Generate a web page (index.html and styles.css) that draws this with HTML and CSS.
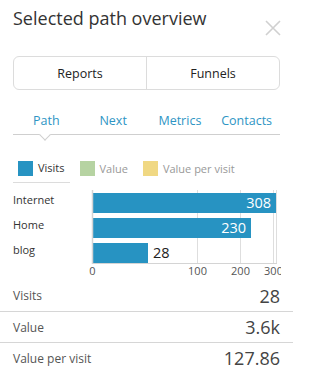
FILE: index.html
```html
<!DOCTYPE html>
<html>
<head>
<meta charset="utf-8">
<link rel="stylesheet" href="styles.css">
</head>
<body>
<div class="panel">
  <div class="header">
    <h1 class="title">Selected path overview</h1>
    <svg class="close" width="16" height="16" viewBox="0 0 16 16"><path d="M1 1L15 15M15 1L1 15" stroke="#d0d0d0" stroke-width="1.6" fill="none"/></svg>
  </div>
  <div class="btn-group">
    <div class="btn">Reports</div>
    <div class="btn">Funnels</div>
  </div>
  <div class="tabs">
    <div class="tab active">Path</div>
    <div class="tab">Next</div>
    <div class="tab">Metrics</div>
    <div class="tab">Contacts</div>
  </div>
  <div class="legend">
    <div class="legend-item active"><span class="swatch blue"></span>Visits</div>
    <div class="legend-item"><span class="swatch green"></span>Value</div>
    <div class="legend-item"><span class="swatch yellow"></span>Value per visit</div>
  </div>
  <div class="chart">
    <div class="labels">
      <div class="label">Internet</div>
      <div class="label">Home</div>
      <div class="label">blog</div>
    </div>
    <svg class="plot" width="201" height="90" viewBox="0 0 201 90">
      <g stroke="#dedede" stroke-width="1">
        <line x1="117.5" y1="0" x2="117.5" y2="74"/>
        <line x1="160.5" y1="0" x2="160.5" y2="74"/>
        <line x1="193.5" y1="0" x2="193.5" y2="74"/>
        <line x1="196.5" y1="0" x2="196.5" y2="74"/>
      </g>
      <rect x="13" y="3" width="183" height="20" fill="#2793c2"/>
      <rect x="13" y="28" width="158" height="20" fill="#2793c2"/>
      <rect x="13" y="53" width="55" height="20" fill="#2793c2"/>
      <line x1="12.5" y1="0" x2="12.5" y2="74" stroke="#d4d4d4" stroke-width="1.5"/>
      <line x1="12" y1="73.5" x2="197" y2="73.5" stroke="#d4d4d4" stroke-width="1"/>
      <g class="val">
        <text x="191" y="18" text-anchor="end" fill="#fff">308</text>
        <text x="166" y="43" text-anchor="end" fill="#fff">230</text>
        <text x="73" y="68" fill="#222">28</text>
      </g>
      <g class="tick">
        <text x="12.5" y="85" text-anchor="middle">0</text>
        <text x="117.5" y="85" text-anchor="middle">100</text>
        <text x="160.5" y="85" text-anchor="middle">200</text>
        <text x="193.5" y="85" text-anchor="middle">300</text>
      </g>
    </svg>
  </div>
  <div class="stats">
    <div class="row"><span class="k">Visits</span><span class="v">28</span></div>
    <div class="row"><span class="k">Value</span><span class="v">3.6k</span></div>
    <div class="row"><span class="k">Value per visit</span><span class="v">127.86</span></div>
  </div>
</div>
</body>
</html>
```
FILE: styles.css
```css
html, body {
  margin: 0;
  padding: 0;
  background: #fff;
}
body {
  font-family: "Open Sans", "Noto Sans", "DejaVu Sans", sans-serif;
  color: #333;
  width: 293px;
  height: 384px;
  overflow: hidden;
}
.header {
  display: flex;
  align-items: flex-start;
  justify-content: space-between;
  padding: 5px 12px 0 13px;
  height: 51px;
  box-sizing: border-box;
}
.title {
  margin: 0;
  font-size: 18px;
  font-weight: 400;
  line-height: 26px;
  color: #333;
}
.close {
  margin-top: 15px;
}
.btn-group {
  display: flex;
  margin: 5px 13px 0 13px;
  height: 34px;
  border: 1px solid #dcdcdc;
  border-radius: 6px;
  box-sizing: border-box;
}
.btn {
  flex: 1;
  display: flex;
  align-items: center;
  justify-content: center;
  font-size: 12.5px;
  color: #222;
}
.btn + .btn {
  border-left: 1px solid #dcdcdc;
}
.tabs {
  display: flex;
  margin: 0 13px;
  padding-top: 21px;
  height: 45px;
  box-sizing: border-box;
  border-bottom: 1px solid #cfcfcf;
}
.tab {
  flex: 1;
  text-align: center;
  font-size: 12.5px;
  color: #2e95c4;
  line-height: 20px;
  position: relative;
}
.tab.active::after {
  content: "";
  position: absolute;
  left: 50%;
  bottom: -5px;
  width: 8px;
  height: 8px;
  margin-left: -5px;
  background: #fff;
  border-right: 1px solid #cfcfcf;
  border-bottom: 1px solid #cfcfcf;
  transform: rotate(45deg);
  box-sizing: border-box;
}
.legend {
  display: flex;
  margin: 25px 13px 0 13px;
  gap: 5px;
}
.legend-item {
  display: flex;
  align-items: center;
  padding: 0 5px 6px 5px;
  font-size: 11px;
  color: #999;
  line-height: 16px;
}
.legend-item.active {
  color: #333;
  border-bottom: 1px solid #dcdcdc;
}
.swatch {
  display: inline-block;
  width: 15px;
  height: 15px;
  margin-right: 5px;
}
.swatch.blue { background: #2793c2; }
.swatch.green { background: #b6d3a2; }
.swatch.yellow { background: #f0d883; }
.chart {
  display: flex;
  margin-top: 7px;
}
.labels {
  width: 80px;
  padding-left: 13px;
  box-sizing: border-box;
  padding-top: 2px;
}
.label {
  height: 25px;
  line-height: 16px;
  font-size: 11px;
  color: #333;
}
.plot {
  display: block;
}
.val text {
  font-family: "Open Sans", "Noto Sans", sans-serif;
  font-size: 14.5px;
}
.tick text {
  font-family: "Open Sans", "Noto Sans", sans-serif;
  font-size: 11px;
  fill: #555;
}
.row {
  display: flex;
  justify-content: space-between;
  align-items: center;
  height: 31px;
  padding: 0 13px;
  box-sizing: border-box;
}
.row + .row {
  border-top: 1px solid #d6d6d6;
}
.k {
  font-size: 12px;
  color: #555;
}
.v {
  font-size: 18px;
  color: #444;
}
```
